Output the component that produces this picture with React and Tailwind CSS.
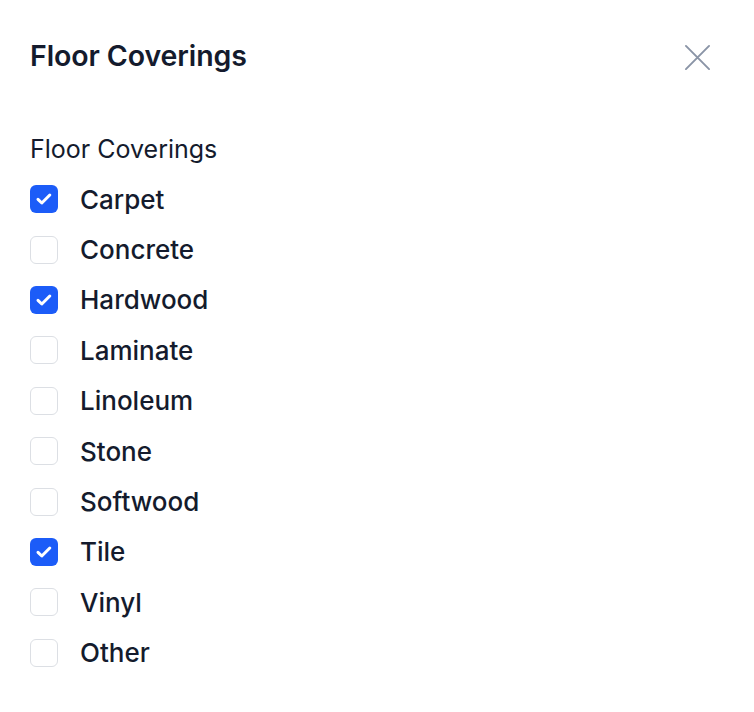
import { useState } from "react";

const OPTIONS = [
  ["Carpet", true],
  ["Concrete", false],
  ["Hardwood", true],
  ["Laminate", false],
  ["Linoleum", false],
  ["Stone", false],
  ["Softwood", false],
  ["Tile", true],
  ["Vinyl", false],
  ["Other", false],
];

function Check({ checked, onClick }) {
  return (
    <button
      onClick={onClick}
      className={
        "w-[28px] h-[28px] rounded-[6px] flex items-center justify-center shrink-0 " +
        (checked ? "bg-[#1c5cf8]" : "bg-white border border-[#dcdfe4]")
      }
    >
      {checked && (
        <svg width="20" height="20" viewBox="0 0 20 20" fill="none">
          <path d="M4 10.4l3.8 3.6 8-8" stroke="white" strokeWidth="3" strokeLinecap="round" strokeLinejoin="round" />
        </svg>
      )}
    </button>
  );
}

export default function App() {
  const [state, setState] = useState(OPTIONS.map(o => o[1]));

  return (
    <div className="w-[754px] h-[712px] bg-white text-[#141b2d] font-['Inter',sans-serif] px-[30px]">
      {/* Header */}
      <div className="flex items-center justify-between pt-[36px] h-[76px]">
        <h1 className="text-[28.5px] font-semibold tracking-[-0.1px]">Floor Coverings</h1>
        <button className="w-[40px] h-[40px] flex items-center justify-center mr-[7px] mt-[3px]">
          <svg width="27" height="27" viewBox="0 0 28 28" fill="none">
            <path d="M2 2l24 24M26 2L2 26" stroke="#8a94a6" strokeWidth="2" strokeLinecap="round" />
          </svg>
        </button>
      </div>

      <div className="mt-[57px] text-[25px] leading-[32px]">Floor Coverings</div>

      <div className="mt-[9px] flex flex-col">
        {OPTIONS.map(([label], i) => (
          <label key={label} className="flex items-center gap-[22px] h-[50.4px] cursor-pointer">
            <Check
              checked={state[i]}
              onClick={() => setState(s => s.map((v, j) => (j === i ? !v : v)))}
            />
            <span className="text-[26px] font-medium">{label}</span>
          </label>
        ))}
      </div>
    </div>
  );
}
